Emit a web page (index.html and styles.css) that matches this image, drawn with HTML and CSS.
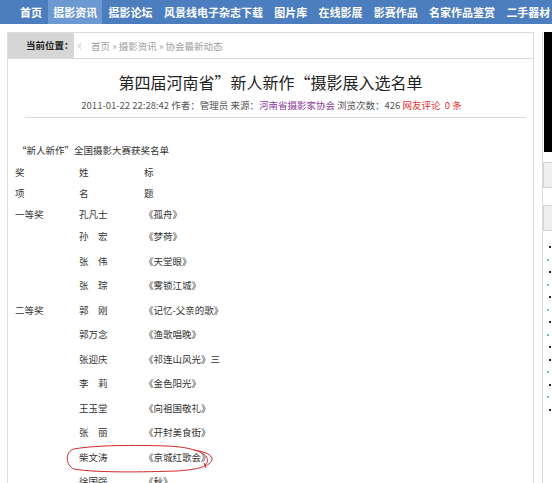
FILE: index.html
```html
<!DOCTYPE html>
<html lang="zh-CN">
<head>
    <meta charset="UTF-8">
    <title>第四届河南省”新人新作“摄影展入选名单</title>
    <link rel="stylesheet" href="styles.css">
</head>
<body>

<div class="nav">
    <a href="#">首页</a>
    <a href="#" class="active">摄影资讯</a>
    <a href="#">摄影论坛</a>
    <a href="#">风景线电子杂志下载</a>
    <a href="#">图片库</a>
    <a href="#">在线影展</a>
    <a href="#">影赛作品</a>
    <a href="#">名家作品鉴赏</a>
    <a href="#">二手器材</a>
</div>

<div class="page">
    <div class="main">
        <div class="crumbs">
            <span class="crumbs-label">当前位置：</span>
            <span class="crumbs-path">首页 &raquo; 摄影资讯 &raquo; 协会最新动态</span>
        </div>

        <h1 class="title">第四届河南省”新人新作“摄影展入选名单</h1>
        <div class="meta">
            2011-01-22 22:28:42 作者：管理员 来源：<a href="#" class="source">河南省摄影家协会</a> 浏览次数：426 <span class="comments">网友评论 &nbsp;0 条</span>
        </div>
        <div class="divider"></div>

        <div class="article">
            <p class="list-title">“新人新作”全国摄影大赛获奖名单</p>
            <div class="awards">
                <div class="row short"><span>奖</span><span>姓</span><span>标</span></div>
                <div class="row short"><span>项</span><span>名</span><span>题</span></div>
                <div class="row short"><span>一等奖</span><span>孔凡士</span><span>《孤舟》</span></div>
                <div class="row"><span></span><span>孙　宏</span><span>《梦荷》</span></div>
                <div class="row"><span></span><span>张　伟</span><span>《天堂眼》</span></div>
                <div class="row"><span></span><span>张　琮</span><span>《雾锁江城》</span></div>
                <div class="row"><span>二等奖</span><span>郭　刚</span><span>《记忆-父亲的歌》</span></div>
                <div class="row"><span></span><span>郭万念</span><span>《渔歌唱晚》</span></div>
                <div class="row"><span></span><span>张迎庆</span><span>《祁连山风光》三</span></div>
                <div class="row"><span></span><span>李　莉</span><span>《金色阳光》</span></div>
                <div class="row"><span></span><span>王玉堂</span><span>《向祖国敬礼》</span></div>
                <div class="row"><span></span><span>张　丽</span><span>《开封美食街》</span></div>
                <div class="row marked">
                    <span></span><span>柴文涛</span><span>《京城红歌会》</span>
                    <svg class="mark" width="150" height="30" viewBox="0 0 150 30">
                        <path d="M139 21 C 148 12, 132 3, 100 2 C 70 1, 30 1, 8 5 C -2 8, 0 22, 8 25 C 30 29, 80 28, 110 27 C 130 26, 146 22, 146 15 C 146 11, 140 8, 128 6" fill="none" stroke="#d0282c" stroke-width="1"/>
                        <path d="M138 19 L 140 24" fill="none" stroke="#d0282c" stroke-width="1"/>
                    </svg>
                </div>
                <div class="row"><span></span><span>徐国强</span><span>《秋》</span></div>
            </div>
        </div>
    </div>

    <div class="side">
        <div class="side-ad"></div>
        <div class="side-tab"></div>
        <div class="side-tab second"></div>
        <ul class="side-list">
            <li></li>
            <li class="dot"></li>
            <li></li>
            <li class="dot"></li>
            <li></li>
            <li class="dot"></li>
            <li></li>
            <li class="dot"></li>
            <li></li>
            <li></li>
            <li class="dot"></li>
            <li></li>
            <li class="dot"></li>
            <li></li>
        </ul>
    </div>
</div>

</body>
</html>
```

FILE: styles.css
```css
body {
    margin: 0;
    font-family: "Noto Sans CJK SC", "Liberation Sans", sans-serif;
    background-color: #fff;
    color: #333;
    overflow: hidden;
}
a {
    text-decoration: none;
}
.nav {
    display: flex;
    height: 24px;
    padding-left: 15px;
    background-color: #4c7dbe;
    white-space: nowrap;
    overflow: hidden;
}
.nav a {
    padding: 0 5px;
    margin-right: 1.3px;
    line-height: 24px;
    color: #fff;
    font-size: 11px;
    font-weight: bold;
}
.nav a.active {
    background-color: #6c99d2;
}
.page {
    display: flex;
    gap: 8px;
    padding: 8px 0 0 7px;
}
.main {
    flex: none;
    width: 525px;
    height: 470px;
    border: 1px solid #dcdcdc;
    border-bottom: none;
}
.crumbs {
    display: flex;
    align-items: center;
    height: 25px;
    border-bottom: 1px solid #dcdcdc;
    font-size: 9.5px;
}
.crumbs-label {
    position: relative;
    width: 48px;
    height: 25px;
    padding-left: 18px;
    line-height: 25px;
    background-color: #d6d6d6;
    color: #222;
    font-weight: bold;
}
.crumbs-label::after {
    content: "";
    position: absolute;
    top: 9px;
    right: -7px;
    border-top: 4px solid transparent;
    border-bottom: 4px solid transparent;
    border-right: 4px solid #e2e2e2;
}
.crumbs-path {
    margin-left: 17px;
    color: #a0a0a0;
}
.title {
    margin: 11px 0 0;
    line-height: 24px;
    font-size: 16px;
    font-weight: normal;
    text-align: center;
    color: #222;
}
.meta {
    margin-top: 4px;
    padding-left: 2px;
    line-height: 14px;
    font-size: 9.5px;
    text-align: center;
    color: #555;
}
.source {
    color: #8e3c9e;
}
.comments {
    color: #e0302f;
}
.divider {
    height: 0;
    margin: 5px 7px 0 17px;
    border-top: 1px solid #dcdcdc;
}
.article {
    padding-left: 7px;
    font-size: 9.5px;
}
.list-title {
    margin: 24px 0 3px 2px;
    line-height: 16px;
}
.row {
    position: relative;
    display: grid;
    grid-template-columns: 64px 65px 1fr;
    align-items: center;
    height: 24.5px;
}
.row.short {
    height: 21px;
}
.mark {
    position: absolute;
    top: -1px;
    left: 51px;
}
.side {
    flex: none;
    width: 200px;
    height: 470px;
    border-left: 1px solid #dcdcdc;
}
.side-ad {
    height: 120px;
    margin-left: 1px;
    background-color: #000;
}
.side-tab {
    height: 24px;
    margin-top: 10px;
    border: 1px solid #d4d4d4;
    background-color: #efefef;
}
.side-tab.second {
    margin-top: 17px;
}
.side-list {
    margin: 10px 0 0;
    padding: 0;
    list-style: none;
}
.side-list li {
    position: relative;
    height: 12.5px;
}
.side-list li::before {
    content: "";
    position: absolute;
    top: 5px;
    left: 6px;
    width: 2px;
    height: 2px;
    background-color: #222;
}
.side-list li.dot::before {
    left: 4px;
    background-color: #7bb3c6;
}
```
